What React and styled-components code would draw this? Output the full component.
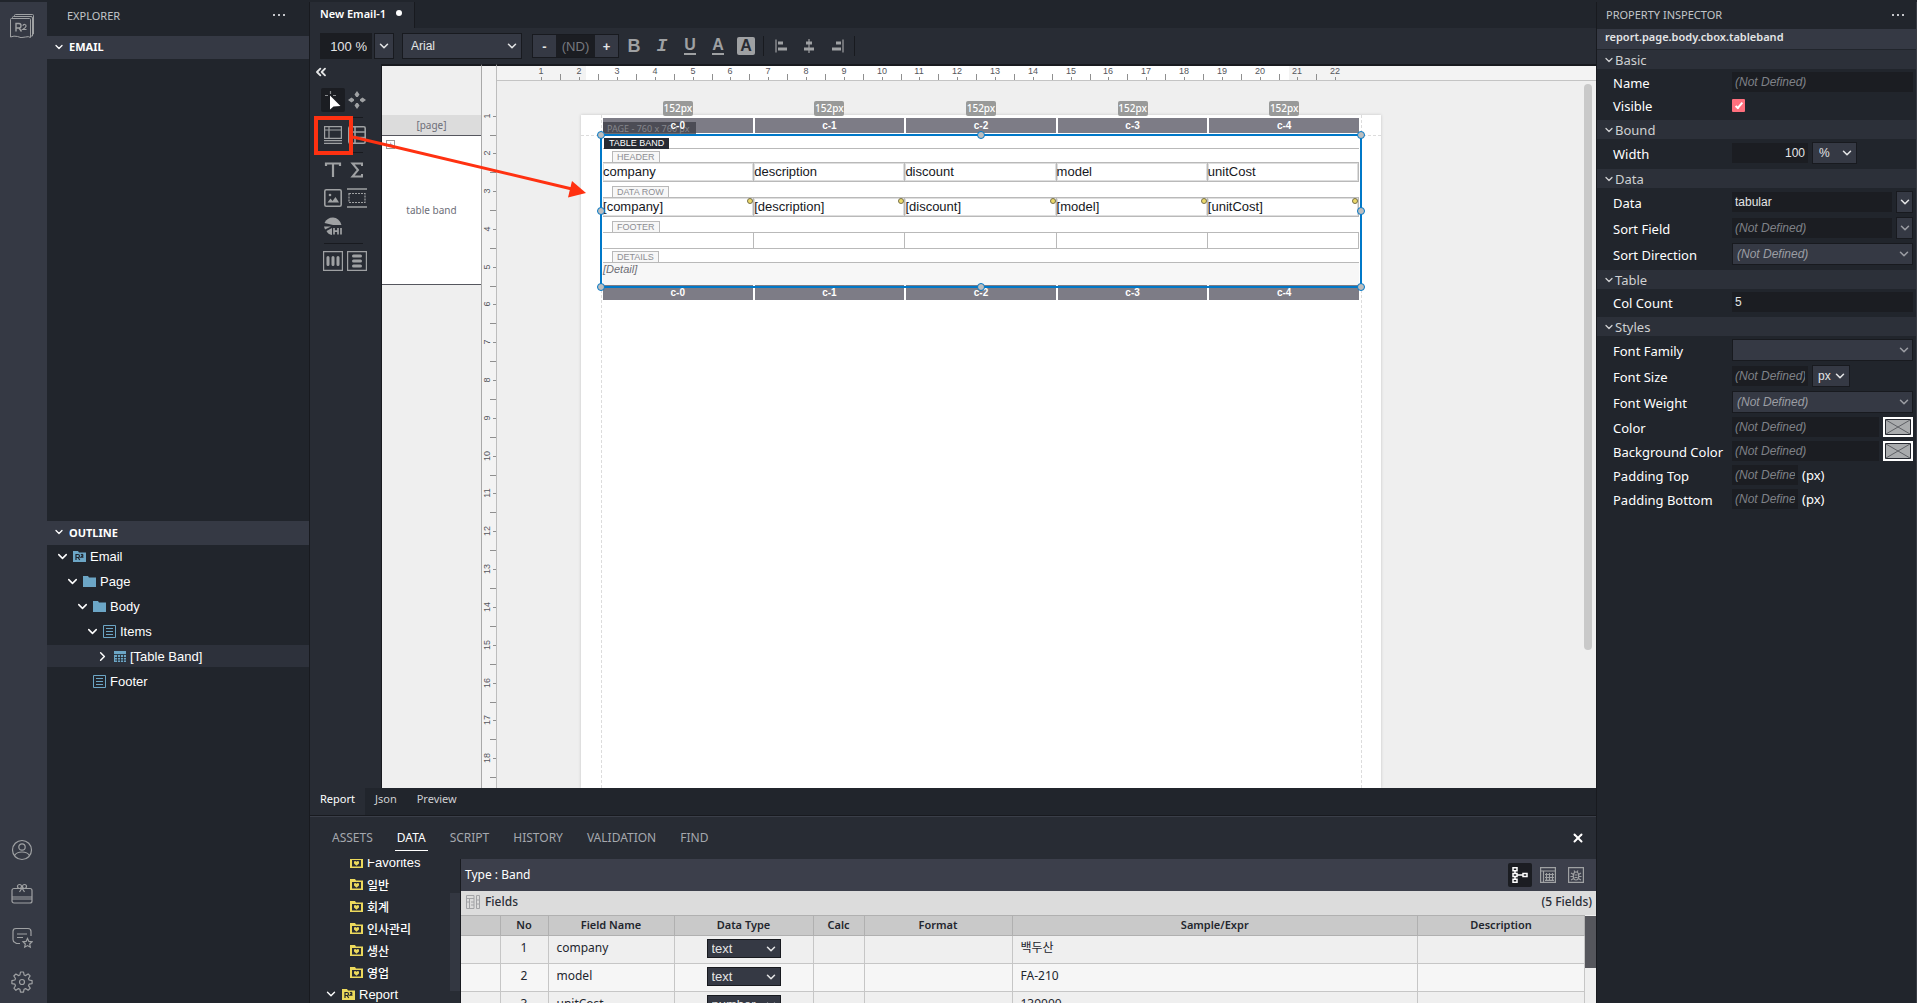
import React from "react";
import styled, { createGlobalStyle, css } from "styled-components";
import { ChevronDown, ChevronRight, ChevronsLeft, X } from "lucide-react";

const UI = `"Noto Sans", "Noto Sans CJK KR", sans-serif`;
const ARIAL = `"Liberation Sans", "Noto Sans CJK KR", sans-serif`;

const c = {
  ink: "#21252c",
  panel: "#282c34",
  bar: "#353944",
  strip: "#3c3f4b",
  field: "#1b1d22",
  line: "#181a1f",
  icon: "#9fa1a3",
  muted: "#a5a8ae",
  text: "#e4e5e6",
  blue: "#0078c8",
  folder: "#6ca6c6",
  yellow: "#ecd95c",
  grid: "#b9b9b9",
};

const Global = createGlobalStyle`
  *, *::before, *::after { box-sizing: border-box; }
  body { margin: 0; background: ${c.ink}; font-family: ${UI}; font-size: 12px; color: ${c.text}; }
  button, input, select { font: inherit; color: inherit; margin: 0; padding: 0; border: 0; background: none; border-radius: 0; outline: none; }
  svg { display: block; flex: none; }
`;

/* ---------- shell ---------- */

const Shell = styled.div`
  display: grid;
  grid-template-columns: 47px 263px minmax(0, 1fr) 321px;
  grid-template-rows: minmax(0, 1fr);
  height: 100vh;
  border-top: 2px solid ${c.ink};
  overflow: hidden;
`;

const Rail = styled.nav`
  display: flex;
  flex-direction: column;
  background: ${c.bar};
  padding: 9px 3px 0 0;
  overflow: hidden;
`;

const RailButton = styled.button`
  display: grid;
  place-items: center;
  flex: none;
  height: ${(p) => (p.$brand ? 28 : 44)}px;
  padding-top: 2px;
  color: ${c.icon};
`;

const Grow = styled.div`
  flex: 1;
`;

const Explorer = styled.aside`
  display: flex;
  flex-direction: column;
  background: ${c.ink};
  border-right: 1px solid ${c.line};
`;

const PaneHead = styled.header`
  display: flex;
  justify-content: space-between;
  align-items: center;
  flex: none;
  height: ${(p) => p.$h}px;
  padding: ${(p) => p.$pad};
  font-size: 11px;
  color: #c3c5c9;
`;

const MoreButton = styled.button`
  display: flex;
  gap: 3px;
  color: #c3c5c9;
  &::before, &::after, span { content: ""; width: 2px; height: 2px; background: currentColor; }
`;

const FoldBar = styled.button`
  display: flex;
  align-items: center;
  gap: 4px;
  flex: none;
  height: ${(p) => p.$h}px;
  padding: 0 6px 2px;
  background: ${c.bar};
  color: #fff;
  font-size: 11px;
  font-weight: 700;
`;

const ExplorerBody = styled.div`
  flex: ${(p) => p.$share} 1 0;
  min-height: 0;
  overflow: hidden;
`;

const Tree = styled.ul`
  list-style: none;
  margin: 0;
  padding: 0;
  display: flex;
  flex-direction: column;
  gap: ${(p) => p.$gap || 0}px;
`;

const TreeRow = styled.li`
  display: flex;
  align-items: center;
  flex: none;
  gap: 4px;
  height: 22px;
  padding-left: ${(p) => p.$indent}px;
  background: ${(p) => (p.$active ? "#2d313b" : "transparent")};
  font-family: ${ARIAL};
  font-size: 13px;
  color: #fff;
  white-space: nowrap;
  span:lang(ko) { font-size: 12px; font-weight: 500; }
`;

const Caret = styled.span`
  display: grid;
  place-items: center;
  width: 14px;
`;

/* ---------- main column ---------- */

const Main = styled.main`
  position: relative;
  display: grid;
  grid-template-rows: 26px 36px minmax(0, 1fr) 28px 187px;
  min-width: 0;
  background: ${c.panel};
`;

const TabStrip = styled.div`
  display: flex;
  background: ${c.ink};
`;

const FileTab = styled.button`
  display: flex;
  align-items: center;
  gap: 10px;
  padding: 0 12px 4px 10px;
  background: ${c.panel};
  border-right: 1px solid ${c.line};
  color: #fff;
  font-size: 11px;
  font-weight: 600;
  &::after { content: ""; width: 6px; height: 6px; border-radius: 50%; background: #fff; }
`;

const Toolbar = styled.div`
  display: flex;
  align-items: center;
  padding-left: 10px;
`;

const ZoomInput = styled.input`
  width: 52px;
  height: 26px;
  margin-right: 2px;
  padding-right: 5px;
  text-align: right;
  font-family: ${ARIAL};
  font-size: 13px;
  background: ${c.field};
`;

const SelectWrap = styled.span`
  display: inline-grid;
  align-items: center;
  width: ${(p) => (p.$w ? p.$w + "px" : "auto")};
  flex: ${(p) => (p.$w ? "none" : 1)};
  height: ${(p) => p.$h || 22}px;
  margin-right: ${(p) => p.$mr || 0}px;
  vertical-align: middle;
  background: ${c.bar};
  border: 1px solid ${c.line};
  color: ${(p) => (p.$dim ? "#9b9da3" : c.text)};
  font-family: ${ARIAL};
  font-size: ${(p) => p.$fs || 12}px;
  font-style: ${(p) => (p.$dim ? "italic" : "normal")};
  select, svg { grid-area: 1 / 1; }
  select { width: 100%; height: 100%; min-width: 0; padding-left: ${(p) => p.$pl || 4}px; appearance: none; }
  svg { justify-self: end; margin-right: ${(p) => p.$cr ?? 2}px; pointer-events: none; }
`;

const Stepper = styled.div`
  display: flex;
  width: 87px;
  height: 24px;
  margin-right: 1px;
  border: 1px solid ${c.line};
  font-family: ${ARIAL};
  font-size: 13px;
  button { width: 23px; background: ${c.bar}; font-weight: 700; }
  input { flex: 1; min-width: 0; text-align: center; background: ${c.field}; }
  input::placeholder { color: #77797f; opacity: 1; }
`;

const ToolButton = styled.button`
  display: grid;
  place-items: center;
  width: 28px;
  height: 26px;
  color: ${c.icon};
`;

const Glyph = styled.span`
  font-family: ${ARIAL};
  font-size: ${(p) => (p.$under || p.$box ? 16 : 18)}px;
  line-height: ${(p) => (p.$under ? 14 : 18)}px;
  font-weight: 700;
  ${(p) => p.$italic && css`font-family: "Liberation Mono", monospace; font-style: italic;`}
  ${(p) => p.$under && css`padding-bottom: 1px; border-bottom: 2px solid ${c.icon};`}
  ${(p) => p.$box && css`width: 18px; text-align: center; background: ${c.icon}; color: ${c.panel}; border-radius: 2px;`}
`;

const Divider = styled.i`
  width: 1px;
  height: 20px;
  margin: 0 3px;
  background: ${c.line};
`;

const Workspace = styled.div`
  display: grid;
  grid-template-columns: 71px 101px 15px minmax(0, 1fr);
  grid-template-rows: minmax(0, 1fr);
  min-height: 0;
`;

const Toolbox = styled.div`
  padding: 0 15px 0 11px;
`;

const CollapseButton = styled.button`
  display: block;
  height: 16px;
  margin: 0 0 8px -8px;
`;

const ToolGrid = styled.div`
  display: grid;
  grid-template-columns: 24px 24px;
  gap: 4px 0;
`;

const ToolRule = styled.hr`
  height: 1px;
  margin: 5px 3px;
  border: 0;
  background: ${c.line};
`;

const PaletteButton = styled.button`
  display: grid;
  place-items: center;
  height: 24px;
  border-radius: 2px;
  background: ${(p) => (p.$on ? c.field : "transparent")};
  color: ${c.icon};
`;

const Structure = styled.div`
  display: flex;
  flex-direction: column;
  padding-top: 49px;
  background: #efefef;
  border-top: 2px solid ${c.line};
  border-left: 1px solid ${c.line};
  border-right: 1px solid #a9a9a9;
  font-size: 10px;
  color: #6d6e78;
`;

const StructPage = styled.div`
  display: grid;
  place-items: center;
  height: 21px;
  background: #dcdcdc;
  border-bottom: 1px solid #55565e;
`;

const StructBand = styled.div`
  position: relative;
  display: grid;
  place-items: center;
  height: 149px;
  background: #fff;
  border-bottom: 1px solid #55565e;
`;

const ExpandButton = styled.button`
  position: absolute;
  top: 4px;
  left: 4px;
  width: 9px;
  height: 9px;
  border: 1px solid #999;
  font-size: 8px;
  line-height: 6px;
`;

const RulerV = styled.div`
  overflow: hidden;
  background: #f3f3f3;
  border-top: 2px solid ${c.line};
  border-right: 1px solid #bdbdbd;
`;

const Stage = styled.div`
  display: grid;
  grid-template-rows: 17px minmax(0, 1fr);
  min-height: 0;
`;

const RulerH = styled.div`
  overflow: hidden;
  background: linear-gradient(90deg, #f3f3f3 89px, #fff 89px 792px, #f3f3f3 792px);
  border-top: 2px solid ${c.line};
  border-bottom: 1px solid #c4c4c4;
`;

const RulerText = styled.text`
  font-family: ${ARIAL};
  font-size: 9px;
  fill: #55565c;
  text-anchor: middle;
`;

const Canvas = styled.div`
  position: relative;
  display: flex;
  overflow: hidden;
  background: #efefef;
  padding: 34px 0 0 84px;
`;

const CanvasScroll = styled.div`
  position: absolute;
  top: 3px;
  right: 4px;
  width: 8px;
  height: 80%;
  border-radius: 4px;
  background: #c9c9c9;
`;

const Page = styled.section`
  position: relative;
  flex: none;
  width: 800px;
  padding: 20px;
  background: #fff;
  box-shadow: 0 0 3px rgba(0, 0, 0, 0.18);
  &::before { content: ""; position: absolute; inset: 0 19px 0 20px; border: dashed #dcdcdc; border-width: 0 1px; }
  &::after { content: ""; position: absolute; inset: 20px 0 auto; border-top: 1px dashed #dcdcdc; }
`;

const Band = styled.div`
  position: relative;
  z-index: 1;
  padding: 0 2px;
  background: #fff;
  font-family: ${ARIAL};
  color: #15171c;
`;

const Selection = styled.div`
  position: absolute;
  inset: 0;
  z-index: 3;
  outline: 2px solid ${c.blue};
  outline-offset: -1px;
  pointer-events: none;
`;

const Handle = styled.i`
  position: absolute;
  left: ${(p) => p.$x};
  top: ${(p) => p.$y};
  width: 8px;
  height: 8px;
  margin: -4px;
  border: 1px solid ${c.blue};
  border-radius: 50%;
  background: #bdbdbd;
`;

const ColumnBars = styled.div`
  position: absolute;
  ${(p) => (p.$top ? "top: -17px" : "bottom: -13px")};
  left: 2px;
  right: 2px;
  display: grid;
  grid-template-columns: repeat(5, 1fr);
  gap: 2px;
`;

const ColumnBar = styled.div`
  position: relative;
  height: 15px;
  background: #7d7c86;
  color: #fff;
  font-size: 10px;
  font-weight: 700;
  line-height: 15px;
  text-align: center;
`;

const ColumnName = styled.span`
  position: relative;
  z-index: 2;
`;

const WidthBadge = styled.span`
  position: absolute;
  left: 50%;
  bottom: 17px;
  width: 30px;
  margin-left: -15px;
  height: 15px;
  border-radius: 2px;
  background: #999a99;
  font-family: ${UI};
  font-size: 10px;
  font-weight: 500;
`;

const PageTag = styled.span`
  position: absolute;
  z-index: 1;
  top: -13px;
  left: 2px;
  width: 93px;
  height: 12px;
  padding-left: 4px;
  overflow: hidden;
  background: rgba(60, 60, 68, 0.75);
  color: #85868c;
  font-family: ${UI};
  font-size: 9px;
  line-height: 13px;
  white-space: nowrap;
`;

const CaptionRow = styled.div`
  display: flex;
  align-items: flex-end;
  height: ${(p) => p.$h}px;
  padding-left: ${(p) => (p.$title ? 1 : 9)}px;
  border-bottom: 1px solid ${c.grid};
`;

const Caption = styled.span`
  height: 11px;
  padding: 0 5px;
  font-size: 9px;
  line-height: 11px;
  ${(p) =>
    p.$title
      ? css`margin-bottom: -1px; background: #262a33; color: #fff;`
      : css`padding: 0 4px; background: #f7f7f7; border: solid ${c.grid}; border-width: 1px 1px 0; color: #8d8e93;`}
`;

const CellRow = styled.div`
  display: grid;
  grid-template-columns: repeat(5, 1fr);
  height: ${(p) => p.$h}px;
  border-bottom: 1px solid ${c.grid};
  font-size: 13px;
  line-height: 17px;
`;

const Cell = styled.div`
  position: relative;
  border-right: 1px solid ${c.grid};
  ${(p) => p.$filled && css`box-shadow: inset 0 0 0 1px #dedede;`}
  ${(p) => p.$dot && css`
    &::after { content: ""; position: absolute; top: 0; right: 0; width: 6px; height: 6px; border: 1px solid #77704a; border-radius: 50%; background: #ecd96a; }
  `}
`;

const Detail = styled.div`
  height: 24px;
  background: #f7f7f7;
  color: #6d6e75;
  font-size: 11px;
  font-style: italic;
  line-height: 13px;
`;

const ViewTabs = styled.div`
  display: flex;
  background: ${c.ink};
  border-bottom: 1px solid ${c.line};
`;

const ViewTab = styled.button`
  padding: 0 10px 6px;
  font-size: 11px;
  color: ${(p) => (p.$on ? "#fff" : "#cfd0d3")};
  background: ${(p) => (p.$on ? c.panel : "transparent")};
`;

/* ---------- bottom panel ---------- */

const Dock = styled.section`
  display: grid;
  grid-template-rows: 42px minmax(0, 1fr);
  border-top: 1px solid #3a3e48;
  min-height: 0;
`;

const DockTabs = styled.div`
  display: flex;
  align-items: flex-start;
  gap: 20px;
  padding: 8px 11px 0 20px;
`;

const DockTab = styled.button`
  height: 26px;
  padding: 0 2px;
  font-size: 12px;
  color: ${(p) => (p.$on ? "#fff" : c.muted)};
  border-bottom: 1px solid ${(p) => (p.$on ? "#fff" : "transparent")};
`;

const CloseButton = styled.button`
  height: 26px;
  margin-left: auto;
  color: #fff;
`;

const DockBody = styled.div`
  display: grid;
  grid-template-columns: 151px minmax(0, 1fr);
  grid-template-rows: minmax(0, 1fr);
  min-height: 0;
`;

const DataTree = styled.div`
  position: relative;
  overflow: hidden;
  border-right: 1px solid ${c.line};
  ul { margin-top: -8px; }
  &::after { content: ""; position: absolute; top: 34px; right: 0; width: 10px; height: 98px; background: #333741; }
`;

const DataPane = styled.div`
  display: grid;
  grid-template-rows: 32px 24px minmax(0, 1fr);
  min-height: 0;
`;

const TypeBar = styled.div`
  display: flex;
  align-items: center;
  gap: 4px;
  padding: 0 8px 0 4px;
  background: ${c.strip};
  color: #fff;
`;

const TypeText = styled.span`
  margin-right: auto;
  padding-bottom: 2px;
  font-size: 12px;
`;

const ModeButton = styled.button`
  display: grid;
  place-items: center;
  width: 24px;
  height: 24px;
  border-radius: 2px;
  background: ${(p) => (p.$on ? c.field : "transparent")};
  color: ${(p) => (p.$on ? "#fff" : c.icon)};
`;

const FieldsBar = styled.div`
  display: flex;
  align-items: center;
  gap: 5px;
  padding: 0 4px 3px 5px;
  background: #dcdcdc;
  color: #2a2d36;
  font-weight: 500;
  span { margin-right: auto; }
`;

const TableArea = styled.div`
  display: grid;
  grid-template-columns: minmax(0, 1fr) 11px;
  align-items: start;
  overflow: hidden;
  background: #efefef;
`;

const TableScroll = styled.div`
  height: 52px;
  margin-top: 1px;
  background: #55565c;
`;

const FieldTable = styled.table`
  width: 100%;
  table-layout: fixed;
  border-collapse: collapse;
  color: #23262e;
  th { height: 20px; padding: 0 8px 2px; background: #c9c9c9; border: 1px solid #b0b0b0; border-left: 0; font-size: 11px; font-weight: 600; line-height: 16px; }
  td { height: 28px; padding: 0 8px 4px; border: 1px solid #c6c6c6; border-left: 0; line-height: 16px; background: #efefef; }
  tr:nth-child(even) td { background: #f6f6f6; }
  td:nth-child(2), td:nth-child(4) { text-align: center; }
  td:nth-child(4) { padding-bottom: 2px; }
`;

/* ---------- inspector ---------- */

const Inspector = styled.aside`
  display: flex;
  flex-direction: column;
  background: ${c.ink};
  border-left: 1px solid ${c.line};
  border-right: 1px solid #3a3d45;
`;

const PathBar = styled.div`
  flex: none;
  height: 20px;
  padding-left: 8px;
  background: ${c.bar};
  font-size: 11px;
  font-weight: 600;
  line-height: 16px;
`;

const Group = styled.section`
  margin-top: 1px;
`;

const GroupHead = styled.button`
  display: flex;
  align-items: center;
  width: 100%;
  height: 19px;
  padding-left: 6px;
  background: #2c3039;
  color: #cfd0d2;
  font-size: 13px;
`;

const GroupBody = styled.div`
  display: flex;
  flex-direction: column;
  gap: 4px;
  padding: 3px 3px 4px 16px;
`;

const Row = styled.div`
  display: grid;
  grid-template-columns: 119px minmax(0, 1fr);
  align-items: center;
  label { padding-top: 2px; font-size: 13px; line-height: 17px; color: #fff; white-space: nowrap; }
`;

const Controls = styled.div`
  display: flex;
  align-items: center;
  gap: 4px;
  font-size: 13px;
  line-height: 18px;
  color: #fff;
`;

const TextBox = styled.input`
  flex: ${(p) => (p.$w ? "none" : 1)};
  width: ${(p) => (p.$w ? p.$w + "px" : "auto")};
  min-width: 0;
  height: 20px;
  padding: 0 3px;
  background: ${c.field};
  color: ${c.text};
  font-family: ${ARIAL};
  font-size: 12px;
  line-height: 18px;
  text-align: ${(p) => (p.$right ? "right" : "left")};
  &::placeholder { color: #7f8187; font-style: italic; opacity: 1; }
`;

const Check = styled.input`
  appearance: none;
  width: 13px;
  height: 13px;
  margin: 3px 0;
  display: grid;
  place-items: center;
  background: #ff6f7d;
  border-radius: 1px;
  &:checked::before { content: ""; width: 4px; height: 8px; margin-top: -2px; border: solid #fff; border-width: 0 2px 2px 0; transform: rotate(40deg); }
`;

const Pick = styled.button`
  display: grid;
  place-items: center;
  width: 17px;
  height: 22px;
  background: ${c.bar};
  border: 1px solid ${c.line};
  color: ${(p) => (p.$dim ? "#9b9da3" : c.text)};
`;

const Swatch = styled.button`
  width: 30px;
  height: 20px;
  padding: 1px;
  background: #fff;
  svg { width: 100%; height: 100%; }
`;

const Annotation = styled.svg`
  position: absolute;
  left: 4px;
  top: 114px;
  z-index: 5;
  pointer-events: none;
`;

/* ---------- icons ---------- */

const Svg = ({ s = 18, vb, w, children, ...r }) => (
  <svg width={w || s} height={s} viewBox={vb || `0 0 ${w || s} ${s}`} fill="none" stroke="currentColor" strokeWidth="1.2" {...r}>
    {children}
  </svg>
);

const BrandIcon = () => (
  <Svg s={24} strokeWidth="1">
    <path d="M.5 5.5q0-1 1-1h18q1 0 1 1v18q-2-1.500-5-.5-5 1.500-8-.5-3.500-1-7 .5z" />
    <path d="M2.500 4.500V3.500q0-1 1-1h17.500q1.500 0 1.500 1.500v18h-2" />
    <path d="M4.500 2.500v-1q0-1 1-1h17q1 0 1 1v18.500h-1" />
    <path strokeWidth="1.400" d="M6 17.500v-8h3q2 0 2 2.200T9 14H6m3 0 2.500 3.500" />
    <path strokeWidth="1.200" d="M12.800 11.800q.5-1.500 2-1.300 1.500.3 1.200 1.800-.3 1.200-3.200 3.200H16.500" />
  </Svg>
);
const UserIcon = () => (
  <Svg s={22}>
    <circle cx="11" cy="11" r="9.500" />
    <circle cx="11" cy="8" r="3.200" />
    <path d="M3.500 16.500q2-3.500 7.500-3.500t7.500 3.500" />
  </Svg>
);
const GiftIcon = () => (
  <Svg s={22}>
    <rect x="1" y="5.500" width="20" height="14.500" rx="2" />
    <path d="M1 14h20M1 16h20M11 5l-2.500 4M11 5l2.500 4" />
    <circle cx="8.500" cy="3.500" r="2" />
    <circle cx="13.500" cy="3.500" r="2" />
  </Svg>
);
const ReviewIcon = () => (
  <Svg s={22}>
    <path d="M9 16.500H5.500L4 15.500q-2-.5-2-3V4.500Q2 1.500 5 1.500h12q3 0 3 3V9" />
    <path d="M6 7h10M6 10.500h6" />
    <path d="m16.500 11.500 1.400 2.900 3.100.4-2.300 2.200.6 3.200-2.800-1.600-2.800 1.600.6-3.200-2.300-2.200 3.100-.4z" />
  </Svg>
);
const GearIcon = () => (
  <Svg s={22}>
    <circle cx="11" cy="11" r="2.500" />
    <path strokeLinejoin="round" d="M9.500 1h3l.6 3 1.500.6 2.500-1.700 2 2-1.600 2.600.6 1.500 3 .6v3l-3 .6-.6 1.500 1.700 2.500-2.100 2-2.500-1.600-1.500.6-.6 3h-3l-.6-3-1.500-.6-2.500 1.700-2-2.100 1.600-2.500-.6-1.500-3-.6v-3l3-.6.6-1.500L2.800 5l2.100-2 2.500 1.600L8.900 4z" />
  </Svg>
);

const FolderIcon = ({ mark, color = c.folder }) => (
  <svg width="13" height="11" viewBox="0 0 13 11">
    <path fill={color} d="M0 0h5l1 1.500h7V11H0z" />
    {mark === "r" && (
      <g fill="none" stroke={c.ink} strokeWidth="1.200">
        <path d="M3 9V3.500h2q1.500 0 1.500 1.500T5 6.500H3M5 6.500 6.800 9" />
        <path d="M8 4q1-1 1.800-.2.500.8-1.800 2.400h2.500" />
      </g>
    )}
    {mark === "heart" && (
      <>
        <rect x="2" y="3" width="9" height="6.500" fill={c.panel} />
        <path fill={color} d="M6.500 8.700 4 6.500V4.500l1.300-.5 1.200.8L7.700 4l1.300.5v2z" />
      </>
    )}
  </svg>
);
const ListIcon = () => (
  <svg width="13" height="13" viewBox="0 0 13 13" fill="none" stroke={c.folder}>
    <path d="M.5.5h12v12H.5z" />
    <path strokeWidth="1.200" d="M3 3.500h7M3 6.500h7M3 9.500h7" />
  </svg>
);
const GridIcon = () => (
  <svg width="13" height="11" viewBox="0 0 13 11">
    <path fill={c.folder} d="M1 0h12v11H1z" />
    <path stroke={c.ink} d="M1 3.500h12M2 6.500h11M2 9h11M4.500 4v7M7.500 4v7M10.500 4v7" strokeWidth=".8" />
  </svg>
);

const AlignIcon = ({ kind }) => (
  <Svg s={16} strokeWidth="2">
    {kind === "left" && <path d="M3 1.500v13" strokeWidth="1.200" />}
    {kind === "center" && <path d="M8 1v14" strokeWidth="1.200" />}
    {kind === "right" && <path d="M14 1.500v13" strokeWidth="1.200" />}
    {kind === "left" && <path d="M5 5h5M5 11h9" strokeWidth="3" />}
    {kind === "center" && <path d="M5 5h6M3 11h10" strokeWidth="3" />}
    {kind === "right" && <path d="M7 5h5M3 11h9" strokeWidth="3" />}
  </Svg>
);

const CursorIcon = () => (
  <Svg s={24}>
    <path d="M9.500 3v3M4 7.500h3M12 7.500h3" stroke="#8a8c8f" />
    <path d="M9 7.500v14l3.500-3 7-.5z" fill="#fff" stroke="none" />
  </Svg>
);
const MoveIcon = () => (
  <Svg s={18} fill="currentColor" stroke="none">
    <path d="M9 0l2.500 3.500L9.800 6H8.200L6.500 3.500zM9 18l2.500-3.500L9.800 12H8.200l-1.700 2.500zM0 9l3.500-2.500L6 8.200v1.600l-2.500 1.700zM18 9l-3.500-2.500L12 8.200v1.600l2.500 1.700z" />
  </Svg>
);
const BandIcon = () => (
  <Svg s={18}>
    <path d="M.6.600h16.800v11.800H.6zM.6 4h16.800M5 .6v11.800" />
    <path d="M0 14.700h18M0 17.400h18" />
  </Svg>
);
const TableIcon = () => (
  <Svg s={18} strokeWidth="1.600">
    <rect x=".8" y=".8" width="16.400" height="16.400" rx="1.500" />
    <path d="M1 6h16M1 11.500h16M7 1v16" />
  </Svg>
);
const TextIcon = () => (
  <Svg s={18} strokeWidth="2.200">
    <path d="M2 5V2.500h14V5M9 2.500V16" />
  </Svg>
);
const SigmaIcon = () => (
  <Svg s={18} strokeWidth="2">
    <path d="M14 5V2.500H4.500L10 9l-5.500 6.500H14V13" />
  </Svg>
);
const ImageIcon = () => (
  <Svg s={18} strokeWidth="1.600">
    <rect x=".8" y=".8" width="16.400" height="16.400" rx="1.500" />
    <path d="m3.500 13.500 3-4 2 2.500L11.500 8l3.500 5.500z" fill="currentColor" stroke="none" />
    <circle cx="6" cy="6" r="1.300" fill="currentColor" stroke="none" />
  </Svg>
);
const RepeatIcon = () => (
  <Svg w={20} s={20}>
    <path d="M0 1h20M0 19h20" strokeWidth="2" opacity=".75" />
    <path d="M2 5.500h16v9H2z" strokeDasharray="2 1" />
  </Svg>
);
const HiIcon = () => (
  <Svg s={18} fill="currentColor" stroke="none">
    <path d="M.5 6Q3 .5 9 .5T17.500 8H9z" />
    <path d="M0 9.500h7L1 12.500zM8 11v7q-4-.5-5.500-4z" />
    <path d="M10 11v6.500M14 11v6.500M10 14.200h4M17 11v6.500" stroke="currentColor" strokeWidth="1.700" />
  </Svg>
);
const ColsIcon = ({ rows }) => (
  <Svg s={20}>
    <path d="M.6.600h18.800v18.800H.6z" />
    {rows ? <path strokeWidth="3" strokeLinecap="round" d="M6.500 5h7M6.500 10h7M6.500 15h7" /> : <path strokeWidth="3" strokeLinecap="round" d="M5 6.500v7M10 6.500v7M15 6.500v7" />}
  </Svg>
);

const FlowIcon = () => (
  <Svg s={16} strokeWidth="1.500">
    <path d="M1 .8h4v3H1zM1 6.500h4v3H1zM1 12.300h4v3H1zM11 6.500h4v3h-4zM3 3.800v2.700M3 9.500v2.800M5 8h6" />
  </Svg>
);
const SheetIcon = () => (
  <Svg s={16}>
    <path d="M.6.600h14.800v14.800H.6zM.6 4h14.800M3.500 4v11.400M6.500 6v8M9.500 6v8M12.500 6v8M5 7.500h9M5 10.500h9M5 13.300h9" />
  </Svg>
);
const BugIcon = () => (
  <Svg s={16}>
    <path d="M.6.600h14.800v14.800H.6z" />
    <ellipse cx="8" cy="9" rx="2.700" ry="4" />
    <path d="M6 3.500 7 5M10 3.500 9 5M3 6l2.500 1.500M13 6l-2.500 1.500M2.500 9.500H5M13.500 9.500H11M3 13l2.500-1.500M13 13l-2.500-1.500M6.500 8h3M6.500 10.500h3" />
  </Svg>
);
const FieldsIcon = () => (
  <svg width="14" height="14" viewBox="0 0 14 14" fill="none" stroke="#a2a3a6">
    <path d="M.5.5h7.500v13H.5zM.5 3.500H8M3.500 3.500v10M.5 7h3M5 7h3M5 10h3M10.500.5h3v13h-3zM10.500 5h3M10.500 9h3" />
  </svg>
);

/* ---------- parts ---------- */

const Chev = ({ size = 14 }) => <ChevronDown size={size} strokeWidth={2.6} />;

const Select = ({ id, label, options, ...p }) => (
  <SelectWrap {...p}>
    <select id={id} aria-label={label} defaultValue={options[0]}>
      {options.map((o) => (
        <option key={o}>{o}</option>
      ))}
    </select>
    <Chev />
  </SelectWrap>
);

const More = () => (
  <MoreButton aria-label="More">
    <span />
  </MoreButton>
);

const STEP = 37.8;

const HorizontalRuler = () => (
  <RulerH>
    <svg width="100%" height="14">
      {Array.from({ length: 22 }, (_, i) => {
        const x = Math.round(6.5 + STEP * (i + 1));
        return (
          <g key={i} stroke="#8f8f8f">
            <path d={`M${x + 0.5} 11v3`} />
            {i < 21 && <path d={`M${x + 19.5} 8v6`} />}
            <RulerText x={x} y="8" stroke="none">{i + 1}</RulerText>
          </g>
        );
      })}
    </svg>
  </RulerH>
);

const VerticalRuler = () => (
  <RulerV>
    <svg width="14" height="100%">
      {Array.from({ length: 18 }, (_, i) => {
        const y = Math.round(11.7 + STEP * (i + 1));
        return (
          <g key={i} stroke="#8f8f8f">
            <path d={`M11 ${y + 0.5}h3M8 ${y + 19.5}h6`} />
            <RulerText transform={`translate(8 ${y}) rotate(-90)`} stroke="none">{i + 1}</RulerText>
          </g>
        );
      })}
    </svg>
  </RulerV>
);

const COLS = ["company", "description", "discount", "model", "unitCost"];

const Bars = ({ top }) => (
  <ColumnBars $top={top}>
    {COLS.map((n, i) => (
      <ColumnBar key={n}>
        {top && <WidthBadge>152px</WidthBadge>}
        <ColumnName>c-{i}</ColumnName>
      </ColumnBar>
    ))}
  </ColumnBars>
);

const TableBand = () => (
  <Band>
    <CaptionRow $h={14} $title><Caption $title>TABLE BAND</Caption></CaptionRow>
    <CaptionRow $h={14}><Caption>HEADER</Caption></CaptionRow>
    <CellRow $h={19}>{COLS.map((n) => <Cell key={n} $filled>{n}</Cell>)}</CellRow>
    <CaptionRow $h={16}><Caption>DATA ROW</Caption></CaptionRow>
    <CellRow $h={19}>{COLS.map((n) => <Cell key={n} $filled $dot>[{n}]</Cell>)}</CellRow>
    <CaptionRow $h={16}><Caption>FOOTER</Caption></CaptionRow>
    <CellRow $h={16}>{COLS.map((n) => <Cell key={n} />)}</CellRow>
    <CaptionRow $h={14}><Caption>DETAILS</Caption></CaptionRow>
    <Detail>[Detail]</Detail>
    <Bars />
    <Bars top />
    <PageTag>PAGE - 760 x 760 px</PageTag>
    <Selection>
      {[["0%", "0%"], ["50%", "0%"], ["100%", "0%"], ["0%", "50%"], ["100%", "50%"], ["0%", "100%"], ["50%", "100%"], ["100%", "100%"]].map(([x, y]) => (
        <Handle key={x + y} $x={x} $y={y} />
      ))}
    </Selection>
  </Band>
);

const OUTLINE = [
  { name: "Email", indent: 8, caret: "open", icon: <FolderIcon mark="r" /> },
  { name: "Page", indent: 18, caret: "open", icon: <FolderIcon /> },
  { name: "Body", indent: 28, caret: "open", icon: <FolderIcon /> },
  { name: "Items", indent: 38, caret: "open", icon: <ListIcon /> },
  { name: "[Table Band]", indent: 48, caret: "closed", icon: <GridIcon />, active: true },
  { name: "Footer", indent: 28, caret: "none", icon: <ListIcon /> },
];

const FAVORITES = ["일반", "회계", "인사관리", "생산", "영업"];

const FIELDS = [
  ["company", "text", "백두산"],
  ["model", "text", "FA-210"],
  ["unitCost", "number", "139000"],
];

const ND = "(Not Defined)";

const Prop = ({ id, label, children }) => (
  <Row>
    <label htmlFor={id}>{label}</label>
    <Controls>{children}</Controls>
  </Row>
);

const Section = ({ title, children }) => (
  <Group>
    <GroupHead><Chev size={12} />{title}</GroupHead>
    <GroupBody>{children}</GroupBody>
  </Group>
);

const ColorSwatch = ({ label }) => (
  <Swatch aria-label={label}>
    <svg viewBox="0 0 28 18">
      <path d="M1.500 1.500h25v15h-25z" fill="#a9abad" stroke="#23262e" />
      <path d="m2 2 24 14M26 2 2 16" stroke="#5f6166" />
    </svg>
  </Swatch>
);

export default function App() {
  return (
    <>
      <Global />
      <Shell>
        <Rail>
          <RailButton $brand aria-label="Reports"><BrandIcon /></RailButton>
          <Grow />
          <RailButton aria-label="Account"><UserIcon /></RailButton>
          <RailButton aria-label="Gifts"><GiftIcon /></RailButton>
          <RailButton aria-label="Feedback"><ReviewIcon /></RailButton>
          <RailButton aria-label="Settings"><GearIcon /></RailButton>
        </Rail>

        <Explorer>
          <PaneHead $h={34} $pad="0 24px 8px 20px">EXPLORER<More /></PaneHead>
          <FoldBar $h={23}><Chev size={12} />EMAIL</FoldBar>
          <ExplorerBody $share={462} />
          <FoldBar $h={24}><Chev size={12} />OUTLINE</FoldBar>
          <ExplorerBody $share={458}>
            <Tree $gap={3}>
              {OUTLINE.map((n) => (
                <TreeRow key={n.name} $indent={n.indent} $active={n.active}>
                  <Caret>
                    {n.caret === "open" && <ChevronDown size={15} strokeWidth={2.4} />}
                    {n.caret === "closed" && <ChevronRight size={15} strokeWidth={2.4} />}
                  </Caret>
                  {n.icon}
                  <span>{n.name}</span>
                </TreeRow>
              ))}
            </Tree>
          </ExplorerBody>
        </Explorer>

        <Main>
          <TabStrip><FileTab>New Email-1</FileTab></TabStrip>
          <Toolbar>
            <ZoomInput aria-label="Zoom" defaultValue="100 %" />
            <Select label="Zoom presets" options={[""]} $w={20} $h={26} $mr={8} />
            <Select label="Font" options={["Arial"]} $w={120} $h={26} $mr={10} $pl={8} $fs={12} />
            <Stepper>
              <button aria-label="Smaller">-</button>
              <input aria-label="Font size" placeholder="(ND)" />
              <button aria-label="Larger">+</button>
            </Stepper>
            <ToolButton aria-label="Bold"><Glyph>B</Glyph></ToolButton>
            <ToolButton aria-label="Italic"><Glyph $italic>I</Glyph></ToolButton>
            <ToolButton aria-label="Underline"><Glyph $under>U</Glyph></ToolButton>
            <ToolButton aria-label="Text color"><Glyph $under>A</Glyph></ToolButton>
            <ToolButton aria-label="Background color"><Glyph $box>A</Glyph></ToolButton>
            <Divider />
            <ToolButton aria-label="Align left"><AlignIcon kind="left" /></ToolButton>
            <ToolButton aria-label="Align center"><AlignIcon kind="center" /></ToolButton>
            <ToolButton aria-label="Align right"><AlignIcon kind="right" /></ToolButton>
            <Divider />
          </Toolbar>

          <Workspace>
            <Toolbox>
              <CollapseButton aria-label="Collapse"><ChevronsLeft size={16} strokeWidth={2.8} /></CollapseButton>
              <ToolGrid>
                <PaletteButton $on aria-label="Select"><CursorIcon /></PaletteButton>
                <PaletteButton aria-label="Move"><MoveIcon /></PaletteButton>
              </ToolGrid>
              <ToolRule />
              <ToolGrid>
                <PaletteButton aria-label="Table band"><BandIcon /></PaletteButton>
                <PaletteButton aria-label="Table"><TableIcon /></PaletteButton>
              </ToolGrid>
              <ToolRule />
              <ToolGrid>
                <PaletteButton aria-label="Text"><TextIcon /></PaletteButton>
                <PaletteButton aria-label="Sum"><SigmaIcon /></PaletteButton>
                <PaletteButton aria-label="Image"><ImageIcon /></PaletteButton>
                <PaletteButton aria-label="Repeat"><RepeatIcon /></PaletteButton>
                <PaletteButton aria-label="Chart"><HiIcon /></PaletteButton>
              </ToolGrid>
              <ToolRule />
              <ToolGrid>
                <PaletteButton aria-label="Columns"><ColsIcon /></PaletteButton>
                <PaletteButton aria-label="Rows"><ColsIcon rows /></PaletteButton>
              </ToolGrid>
            </Toolbox>
            <Structure>
              <StructPage>[page]</StructPage>
              <StructBand><ExpandButton aria-label="Expand">+</ExpandButton>table band</StructBand>
            </Structure>
            <VerticalRuler />
            <Stage>
              <HorizontalRuler />
              <Canvas>
                <Page><TableBand /></Page>
                <CanvasScroll />
              </Canvas>
            </Stage>
          </Workspace>

          <ViewTabs>
            <ViewTab $on>Report</ViewTab>
            <ViewTab>Json</ViewTab>
            <ViewTab>Preview</ViewTab>
          </ViewTabs>

          <Dock>
            <DockTabs>
              {["ASSETS", "DATA", "SCRIPT", "HISTORY", "VALIDATION", "FIND"].map((t) => (
                <DockTab key={t} $on={t === "DATA"}>{t}</DockTab>
              ))}
              <CloseButton aria-label="Close"><X size={14} strokeWidth={3.4} /></CloseButton>
            </DockTabs>
            <DockBody>
              <DataTree>
                <Tree>
                  {["Favorites", ...FAVORITES].map((n, i) => (
                    <TreeRow key={n} $indent={40}>
                      <FolderIcon mark="heart" color={c.yellow} />
                      <span lang={i ? "ko" : "en"}>{n}</span>
                    </TreeRow>
                  ))}
                  <TreeRow $indent={14}>
                    <Caret><ChevronDown size={14} strokeWidth={2.4} /></Caret>
                    <FolderIcon mark="r" color={c.yellow} />
                    <span>Report</span>
                  </TreeRow>
                </Tree>
              </DataTree>
              <DataPane>
                <TypeBar>
                  <TypeText>Type : Band</TypeText>
                  <ModeButton $on aria-label="Diagram"><FlowIcon /></ModeButton>
                  <ModeButton aria-label="Sheet"><SheetIcon /></ModeButton>
                  <ModeButton aria-label="Debug"><BugIcon /></ModeButton>
                </TypeBar>
                <FieldsBar><FieldsIcon /><span>Fields</span>(5 Fields)</FieldsBar>
                <TableArea>
                  <FieldTable>
                    <colgroup>
                      <col width="39" /><col width="48" /><col width="126" /><col width="139" />
                      <col width="51" /><col width="148" /><col /><col width="167" />
                    </colgroup>
                    <thead>
                      <tr>
                        {["", "No", "Field Name", "Data Type", "Calc", "Format", "Sample/Expr", "Description"].map((h) => (
                          <th key={h}>{h}</th>
                        ))}
                      </tr>
                    </thead>
                    <tbody>
                      {FIELDS.map(([name, type, sample], i) => (
                        <tr key={name}>
                          <td />
                          <td>{i + 1}</td>
                          <td>{name}</td>
                          <td><Select label={`${name} type`} options={[type]} $w={74} $h={19} $fs={13} /></td>
                          <td />
                          <td />
                          <td>{sample}</td>
                          <td />
                        </tr>
                      ))}
                    </tbody>
                  </FieldTable>
                  <TableScroll />
                </TableArea>
              </DataPane>
            </DockBody>
          </Dock>

          <Annotation width="276" height="86" fill="none" stroke="#ff3111">
            <rect x="2" y="2" width="35" height="35" strokeWidth="4" />
            <path d="M39 21 258 73" strokeWidth="3" />
            <path d="M272 77 254 81.500 258 65z" fill="#ff3111" stroke="none" />
          </Annotation>
        </Main>

        <Inspector>
          <PaneHead $h={27} $pad="0 12px 2px 9px">PROPERTY INSPECTOR<More /></PaneHead>
          <PathBar>report.page.body.cbox.tableband</PathBar>
          <Section title="Basic">
            <Prop id="name" label="Name"><TextBox id="name" placeholder={ND} /></Prop>
            <Prop id="visible" label="Visible"><Check id="visible" type="checkbox" defaultChecked /></Prop>
          </Section>
          <Section title="Bound">
            <Prop id="width" label="Width">
              <TextBox id="width" $w={76} $right defaultValue="100" />
              <Select label="Width unit" options={["%"]} $w={45} $pl={6} />
            </Prop>
          </Section>
          <Section title="Data">
            <Prop id="data" label="Data"><TextBox id="data" defaultValue="tabular" /><Pick aria-label="Pick data"><Chev size={14} /></Pick></Prop>
            <Prop id="sort" label="Sort Field"><TextBox id="sort" placeholder={ND} /><Pick $dim aria-label="Pick sort field"><Chev size={14} /></Pick></Prop>
            <Prop id="dir" label="Sort Direction"><Select id="dir" options={[ND]} $dim $cr={1} /></Prop>
          </Section>
          <Section title="Table">
            <Prop id="cols" label="Col Count"><TextBox id="cols" defaultValue="5" /></Prop>
          </Section>
          <Section title="Styles">
            <Prop id="family" label="Font Family"><Select id="family" options={[""]} $dim $cr={1} /></Prop>
            <Prop id="size" label="Font Size">
              <TextBox id="size" $w={76} placeholder={ND} />
              <Select label="Font size unit" options={["px"]} $w={38} $pl={5} />
            </Prop>
            <Prop id="weight" label="Font Weight"><Select id="weight" options={[ND]} $dim $cr={1} /></Prop>
            <Prop id="color" label="Color"><TextBox id="color" placeholder={ND} /><ColorSwatch label="Pick color" /></Prop>
            <Prop id="bg" label="Background Color"><TextBox id="bg" placeholder={ND} /><ColorSwatch label="Pick background color" /></Prop>
            <Prop id="pt" label="Padding Top"><TextBox id="pt" $w={66} placeholder={ND} />(px)</Prop>
            <Prop id="pb" label="Padding Bottom"><TextBox id="pb" $w={66} placeholder={ND} />(px)</Prop>
          </Section>
        </Inspector>
      </Shell>
    </>
  );
}
